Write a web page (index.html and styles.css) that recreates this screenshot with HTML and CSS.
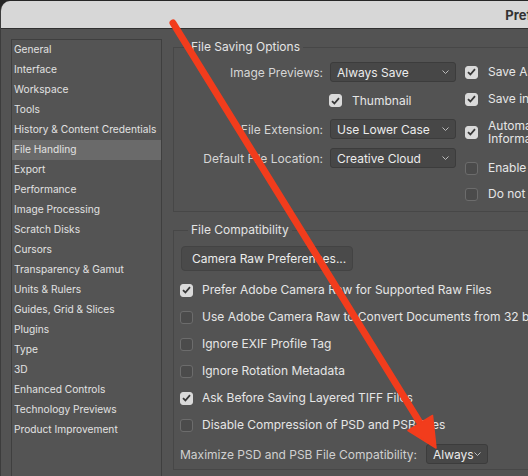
FILE: index.html
```html
<!DOCTYPE html>
<html>
<head>
<meta charset="utf-8">
<link rel="stylesheet" href="styles.css">
</head>
<body>
<div class="window">
  <div class="titlebar"><span class="title">Preferences</span></div>
  <div class="content">
    <ul class="sidebar">
      <li>General</li>
      <li>Interface</li>
      <li>Workspace</li>
      <li>Tools</li>
      <li>History &amp; Content Credentials</li>
      <li class="selected">File Handling</li>
      <li>Export</li>
      <li>Performance</li>
      <li>Image Processing</li>
      <li>Scratch Disks</li>
      <li>Cursors</li>
      <li>Transparency &amp; Gamut</li>
      <li>Units &amp; Rulers</li>
      <li>Guides, Grid &amp; Slices</li>
      <li>Plugins</li>
      <li>Type</li>
      <li>3D</li>
      <li>Enhanced Controls</li>
      <li>Technology Previews</li>
      <li>Product Improvement</li>
    </ul>
    <div class="main">
      <fieldset class="group group-saving">
        <legend>File Saving Options</legend>
        <div class="saving">
          <div class="saving-left">
            <div class="form-row">
              <span class="label">Image Previews:</span>
              <div class="dropdown dd-wide"><span>Always Save</span><svg class="chev" width="7" height="4" viewBox="0 0 7 4"><polyline points="0.5,0.5 3.5,3.5 6.5,0.5" fill="none" stroke="#bdbdbd" stroke-width="1"/></svg></div>
            </div>
            <div class="form-row thumb-row">
              <span class="label"></span>
              <div class="check-item"><span class="cb checked"><svg width="9" height="8" viewBox="0 0 9 8"><polyline points="1,4.2 3.4,6.5 8,1.2" fill="none" stroke="#383838" stroke-width="1.8"/></svg></span><span class="cb-text">Thumbnail</span></div>
            </div>
            <div class="form-row">
              <span class="label">File Extension:</span>
              <div class="dropdown dd-wide"><span>Use Lower Case</span><svg class="chev" width="7" height="4" viewBox="0 0 7 4"><polyline points="0.5,0.5 3.5,3.5 6.5,0.5" fill="none" stroke="#bdbdbd" stroke-width="1"/></svg></div>
            </div>
            <div class="form-row row-last">
              <span class="label">Default File Location:</span>
              <div class="dropdown dd-wide"><span>Creative Cloud</span><svg class="chev" width="7" height="4" viewBox="0 0 7 4"><polyline points="0.5,0.5 3.5,3.5 6.5,0.5" fill="none" stroke="#bdbdbd" stroke-width="1"/></svg></div>
            </div>
          </div>
          <div class="saving-right">
            <div class="check-item r1"><span class="cb checked"><svg width="9" height="8" viewBox="0 0 9 8"><polyline points="1,4.2 3.4,6.5 8,1.2" fill="none" stroke="#383838" stroke-width="1.8"/></svg></span><span class="cb-text">Save As to Original Folder</span></div>
            <div class="check-item r2"><span class="cb checked"><svg width="9" height="8" viewBox="0 0 9 8"><polyline points="1,4.2 3.4,6.5 8,1.2" fill="none" stroke="#383838" stroke-width="1.8"/></svg></span><span class="cb-text">Save in Background</span></div>
            <div class="check-item r3"><span class="cb checked"><svg width="9" height="8" viewBox="0 0 9 8"><polyline points="1,4.2 3.4,6.5 8,1.2" fill="none" stroke="#383838" stroke-width="1.8"/></svg></span><span class="cb-text two-line">Automatically Save Recovery<br>Information Every:</span></div>
            <div class="check-item r4"><span class="cb"></span><span class="cb-text">Enable legacy "Save As"</span></div>
            <div class="check-item r5"><span class="cb"></span><span class="cb-text">Do not append "copy" to filename</span></div>
          </div>
        </div>
      </fieldset>

      <fieldset class="group group-compat">
        <legend>File Compatibility</legend>
        <div class="compat">
          <div class="button">Camera Raw Preferences...</div>
          <div class="check-item c-row first"><span class="cb checked"><svg width="9" height="8" viewBox="0 0 9 8"><polyline points="1,4.2 3.4,6.5 8,1.2" fill="none" stroke="#383838" stroke-width="1.8"/></svg></span><span class="cb-text">Prefer Adobe Camera Raw for Supported Raw Files</span></div>
          <div class="check-item c-row"><span class="cb"></span><span class="cb-text">Use Adobe Camera Raw to Convert Documents from 32 bit to 16/8 bit</span></div>
          <div class="check-item c-row"><span class="cb"></span><span class="cb-text">Ignore EXIF Profile Tag</span></div>
          <div class="check-item c-row"><span class="cb"></span><span class="cb-text">Ignore Rotation Metadata</span></div>
          <div class="check-item c-row"><span class="cb checked"><svg width="9" height="8" viewBox="0 0 9 8"><polyline points="1,4.2 3.4,6.5 8,1.2" fill="none" stroke="#383838" stroke-width="1.8"/></svg></span><span class="cb-text">Ask Before Saving Layered TIFF Files</span></div>
          <div class="check-item c-row"><span class="cb"></span><span class="cb-text">Disable Compression of PSD and PSB Files</span></div>
          <div class="max-row">
            <span class="label-left">Maximize PSD and PSB File Compatibility:</span>
            <div class="dropdown dd-small"><span>Always</span><svg class="chev" width="7" height="4" viewBox="0 0 7 4"><polyline points="0.5,0.5 3.5,3.5 6.5,0.5" fill="none" stroke="#bdbdbd" stroke-width="1"/></svg></div>
          </div>
        </div>
      </fieldset>
    </div>
  </div>
</div>
<svg class="arrow" width="528" height="476" viewBox="0 0 528 476">
  <line x1="173" y1="23" x2="422" y2="426" stroke="#f23c1c" stroke-width="7" stroke-linecap="round"/>
  <polygon points="436,448 408,430.5 432.5,415.5" fill="#f23c1c" stroke="#f23c1c" stroke-width="1.5" stroke-linejoin="round"/>
</svg>
</body>
</html>
```

FILE: styles.css
```css
html, body {
  margin: 0;
  padding: 0;
}
body {
  width: 528px;
  height: 476px;
  overflow: hidden;
  background: #262626;
  position: relative;
  font-family: "Inter", "Liberation Sans", sans-serif;
}
.window {
  width: 1086px;
  height: 475px;
  margin-top: 1px;
  background: #535353;
  border-top-left-radius: 10px;
  border-left: 1px solid #3c3c3c;
  overflow: hidden;
}
.titlebar {
  height: 27px;
  background: #d7d7d7;
  border-bottom: 1px solid #2f2f2f;
  display: flex;
  align-items: center;
  justify-content: center;
}
.title {
  font-weight: 700;
  font-size: 13px;
  color: #333333;
}
.content {
  display: flex;
  align-items: flex-start;
  padding-top: 10px;
}
.sidebar {
  list-style: none;
  margin: 0 0 0 10px;
  padding: 0;
  width: 149px;
  height: 460px;
  flex: none;
  border: 1px solid #3f3f3f;
  background: #545454;
}
.sidebar li {
  height: 20px;
  line-height: 18px;
  padding-left: 2px;
  font-size: 10.2px;
  color: #e2e2e2;
  white-space: nowrap;
}
.sidebar li.selected {
  background: #6a6a6a;
}
.main {
  flex: 1;
  margin-left: 11px;
  display: flex;
  flex-direction: column;
}
.group {
  margin: 0;
  padding: 0;
  border: 1px solid #474747;
  min-width: 0;
}
.group legend {
  margin-left: 14px;
  padding: 0 3px;
  font-size: 12px;
  line-height: 16px;
  color: #e4e4e4;
}
.group-compat {
  margin-top: 10px;
}
.saving {
  display: flex;
  align-items: flex-start;
  padding-top: 7px;
  padding-bottom: 9px;
}
.saving-left {
  display: flex;
  flex-direction: column;
}
.form-row {
  display: flex;
  align-items: center;
  height: 20px;
}
.form-row .label {
  width: 149px;
  text-align: right;
  margin-right: 7px;
  font-size: 12px;
  color: #d6d6d6;
  white-space: nowrap;
  flex: none;
}
.thumb-row {
  height: 13px;
  margin: 12px 0;
}
.thumb-row .label {
  margin-right: 6px;
}
.row-last {
  margin-top: 9px;
}
.dropdown {
  box-sizing: border-box;
  height: 20px;
  background: #474747;
  border: 1px solid #3c3c3c;
  border-radius: 3px;
  display: flex;
  align-items: center;
  justify-content: space-between;
  padding: 0 6px 0 6px;
  font-size: 12px;
  color: #ececec;
  white-space: nowrap;
}
.dd-wide {
  width: 126px;
}
.dd-small {
  width: 62px;
}
.chev {
  flex: none;
}
.saving-right {
  display: flex;
  flex-direction: column;
  margin-left: 9px;
  padding-top: 2px;
}
.check-item {
  display: flex;
  align-items: center;
  white-space: nowrap;
}
.cb {
  box-sizing: border-box;
  width: 13px;
  height: 13px;
  flex: none;
  border-radius: 3px;
  background: #4b4b4b;
  border: 1px solid #6c6c6c;
  display: flex;
  align-items: center;
  justify-content: center;
}
.cb.checked {
  background: #dadada;
  border-color: #dadada;
}
.cb-text {
  margin-left: 10px;
  font-size: 12px;
  line-height: 16px;
  color: #e6e6e6;
}
.two-line {
  line-height: 13px;
}
.r2 { margin-top: 11px; }
.r3 { margin-top: 12px; }
.r4 { margin-top: 15px; }
.r5 { margin-top: 10px; }
.compat {
  display: flex;
  flex-direction: column;
  align-items: flex-start;
  padding: 8px 0 5px 6px;
}
.button {
  box-sizing: border-box;
  margin-left: 1px;
  width: 172px;
  height: 25px;
  line-height: 23px;
  padding-left: 10px;
  background: #4a4a4a;
  border: 1px solid #434343;
  border-radius: 4px;
  font-size: 12px;
  color: #ececec;
  white-space: nowrap;
}
.c-row {
  margin-top: 11px;
}
.c-row.first {
  margin-top: 11px;
}
.c-row .cb-text {
  margin-left: 9px;
}
.max-row {
  display: flex;
  align-items: center;
  margin-top: 11px;
  height: 20px;
}
.label-left {
  font-size: 12px;
  color: #d0d0d0;
  white-space: nowrap;
  margin-right: 9px;
}
.arrow {
  position: absolute;
  top: 0;
  left: 0;
  pointer-events: none;
}
```
